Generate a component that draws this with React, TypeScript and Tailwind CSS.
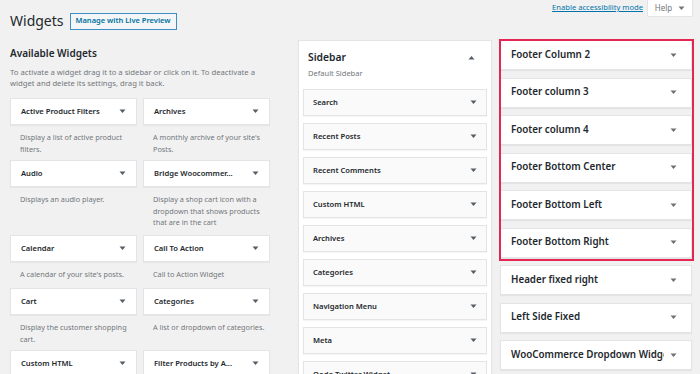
import React from "react";

const Arrow = ({ up = false, color = "#555d66" }: { up?: boolean; color?: string }) => (
  <svg width="7" height="5" viewBox="0 0 7 5" className="shrink-0">
    {up ? <polygon points="0.5,4.5 6.5,4.5 3.5,1" fill={color} /> : <polygon points="0.5,0.5 6.5,0.5 3.5,4" fill={color} />}
  </svg>
);

type W = { t: string; d?: string[] };

const rows: { items: W[]; h: string }[] = [
  {
    items: [
      { t: "Active Product Filters", d: ["Display a list of active product", "filters."] },
      { t: "Archives", d: ["A monthly archive of your site's", "Posts."] },
    ],
    h: "h-[35px]",
  },
  {
    items: [
      { t: "Audio", d: ["Displays an audio player."] },
      { t: "Bridge Woocommer...", d: ["Display a shop cart icon with a", "dropdown that shows products", "that are in the cart"] },
    ],
    h: "h-[48px]",
  },
  {
    items: [
      { t: "Calendar", d: ["A calendar of your site's posts."] },
      { t: "Call To Action", d: ["Call to Action Widget"] },
    ],
    h: "h-[26px]",
  },
  {
    items: [
      { t: "Cart", d: ["Display the customer shopping", "cart."] },
      { t: "Categories", d: ["A list or dropdown of categories."] },
    ],
    h: "h-[35px]",
  },
  {
    items: [{ t: "Custom HTML" }, { t: "Filter Products by A..." }],
    h: "h-[26px]",
  },
];

const sidebarWidgets = [
  "Search",
  "Recent Posts",
  "Recent Comments",
  "Custom HTML",
  "Archives",
  "Categories",
  "Navigation Menu",
  "Meta",
  "Oodo Twitter Widget",
];

const highlighted = [
  "Footer Column 2",
  "Footer column 3",
  "Footer column 4",
  "Footer Bottom Center",
  "Footer Bottom Left",
  "Footer Bottom Right",
];
const others = ["Header fixed right", "Left Side Fixed", "WooCommerce Dropdown Widget"];

const AreaBox = ({ t }: { t: string }) => (
  <div className="h-[30px] shrink-0 bg-white border border-[#e2e4e7] shadow-[0_1px_1px_rgba(0,0,0,0.05)] flex items-center pl-[10px] pr-[14px] gap-[6px]">
    <span className="flex-1 min-w-0 whitespace-nowrap overflow-hidden text-[9.8px] font-semibold text-[#23282d]">{t}</span>
    <Arrow color="#6c7177" />
  </div>
);

export default function App() {
  return (
    <div
      className="w-[700px] h-[374px] overflow-hidden bg-[#f1f1f1] text-[#23282d]"
      style={{ fontFamily: '"Noto Sans", "Open Sans", sans-serif' }}
    >
      {/* top row */}
      <div className="flex justify-between items-start">
        <div className="flex items-center pl-[10px] pt-[11px] gap-[6px]">
          <h1 className="text-[14px] leading-[20px] font-normal text-[#23282d]">Widgets</h1>
          <div className="h-[17px] px-[5px] flex items-center border border-[#3d8fc3] bg-[#f3f5f6] text-[7.5px] font-semibold text-[#0071a1]">
            Manage with Live Preview
          </div>
        </div>
        <div className="flex items-start gap-[4px] pr-[7px]">
          <a className="text-[7.6px] leading-[15px] text-[#0073aa] underline">Enable accessibility mode</a>
          <div className="h-[17px] w-[46px] bg-white border border-t-0 border-[#e2e4e7] rounded-b-[2px] flex items-center justify-center gap-[6px] text-[8px] text-[#72777c]">
            <span>Help</span>
            <Arrow color="#72777c" />
          </div>
        </div>
      </div>

      {/* main */}
      <div className="flex items-start mt-[9px]">
        {/* available widgets */}
        <div className="w-[260px] ml-[10px] pt-[6px]">
          <h2 className="text-[10px] leading-[15px] font-semibold text-[#23282d]">Available Widgets</h2>
          <p className="mt-[6px] text-[7.7px] leading-[11px] text-[#72777c]">
            To activate a widget drag it to a sidebar or click on it. To deactivate a
            <br />
            widget and delete its settings, drag it back.
          </p>
          <div className="mt-[9px] flex flex-col">
            {rows.map((r, i) => (
              <div key={i} className="grid grid-cols-[127px_127px] gap-x-[6px]">
                {r.items.map((w) => (
                  <div key={w.t} className="flex flex-col">
                    <div className="h-[27px] bg-white border border-[#e2e4e7] shadow-[0_1px_1px_rgba(0,0,0,0.04)] flex items-center pl-[10px] pr-[10px]">
                      <span className="flex-1 text-[7.6px] font-semibold text-[#23282d] whitespace-nowrap">{w.t}</span>
                      <Arrow />
                    </div>
                    <div className={`${r.h} pt-[7px] pl-[10px] text-[7.3px] leading-[11.5px] text-[#72777c]`}>
                      {w.d?.map((l) => (
                        <div key={l} className="whitespace-nowrap">
                          {l}
                        </div>
                      ))}
                    </div>
                  </div>
                ))}
              </div>
            ))}
          </div>
        </div>

        {/* sidebar panel */}
        <div className="ml-[28px] w-[194px] h-[400px] bg-white border border-[#e2e4e7] shadow-[0_1px_1px_rgba(0,0,0,0.04)]">
          <div className="flex items-center pl-[9px] pr-[16px] pt-[8px]">
            <span className="flex-1 text-[10.3px] leading-[17px] font-semibold text-[#23282d]">Sidebar</span>
            <Arrow up color="#555d66" />
          </div>
          <div className="pl-[9px] mt-[2px] text-[7.5px] leading-[11px] text-[#72777c]">Default Sidebar</div>
          <div className="flex flex-col gap-[7px] mx-[4px] mt-[10px]">
            {sidebarWidgets.map((s) => (
              <div
                key={s}
                className="h-[27px] shrink-0 bg-[#fafafa] border border-[#e2e4e7] shadow-[0_1px_1px_rgba(0,0,0,0.04)] flex items-center pl-[9px] pr-[9px]"
              >
                <span className="flex-1 text-[7.6px] font-semibold text-[#23282d] whitespace-nowrap">{s}</span>
                <Arrow />
              </div>
            ))}
          </div>
        </div>

        {/* right column */}
        <div className="ml-[8px] w-[192px] flex flex-col gap-[7.5px]">
          <div className="relative flex flex-col gap-[7.5px]">
            {highlighted.map((t) => (
              <AreaBox key={t} t={t} />
            ))}
            <div className="absolute -left-[1.5px] -right-[1.5px] -top-[1px] -bottom-[3px] border-2 border-[#e52652] pointer-events-none" />
          </div>
          {others.map((t) => (
            <AreaBox key={t} t={t} />
          ))}
        </div>
      </div>
    </div>
  );
}
